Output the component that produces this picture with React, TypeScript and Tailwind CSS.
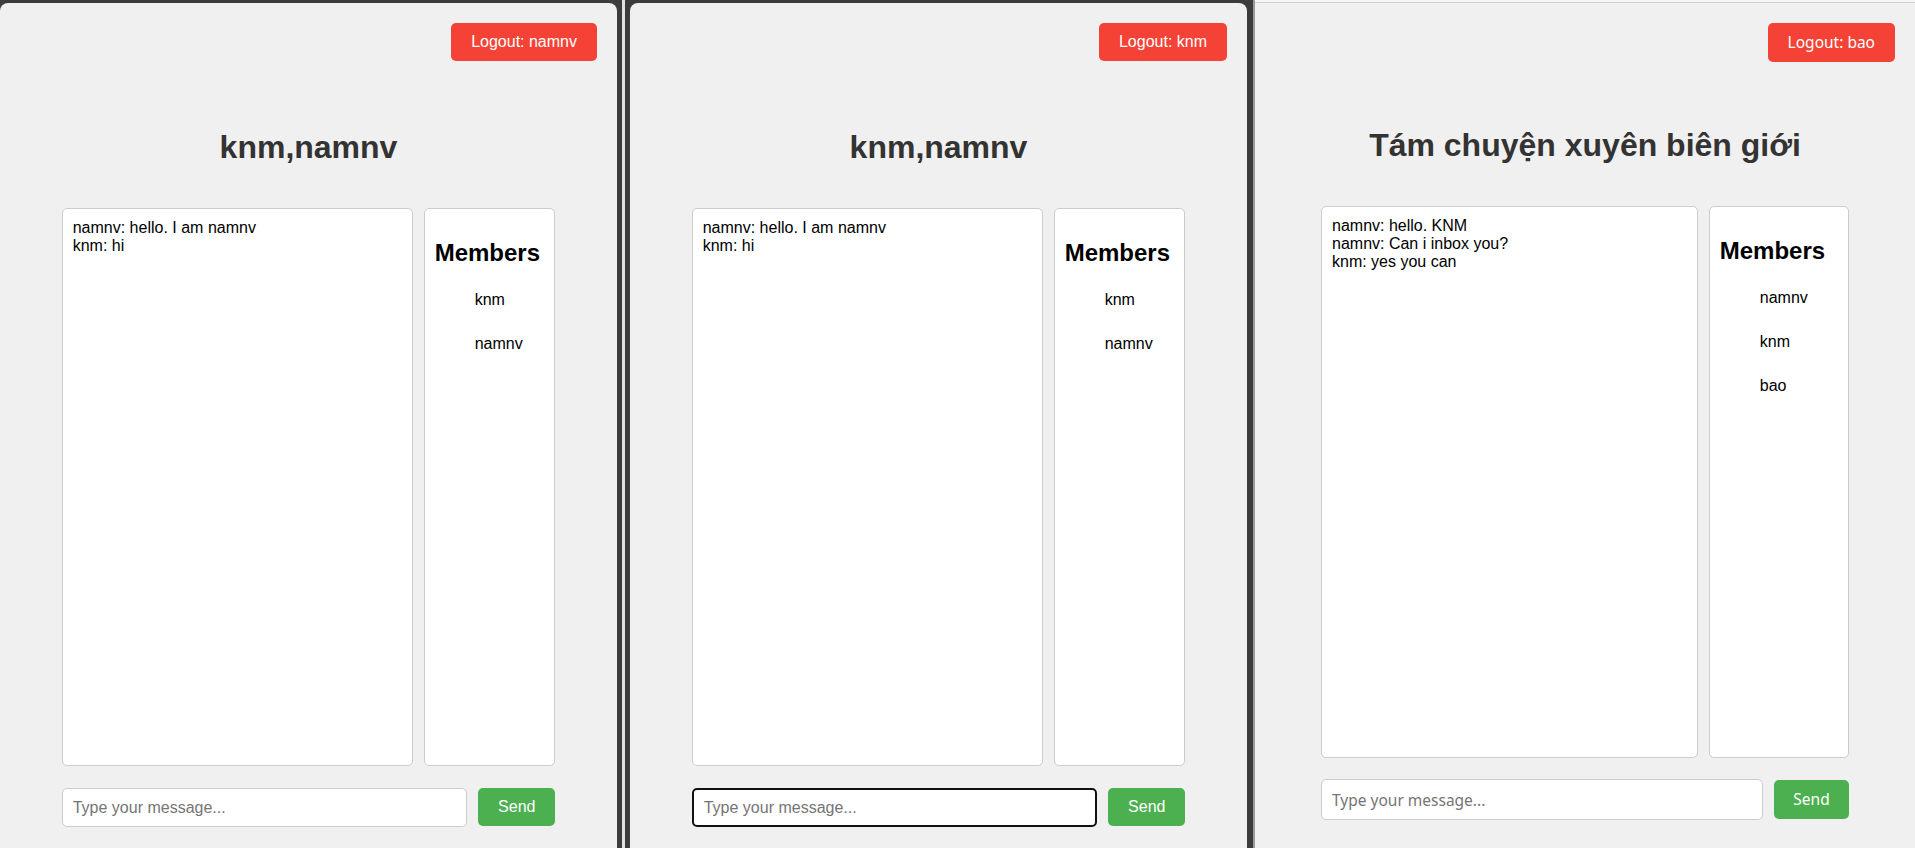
import React from "react";

type WinProps = {
  title: string;
  user: string;
  messages: string[];
  members: string[];
  focused?: boolean;
  ff?: boolean;
};

function ChatWindow({ title, user, messages, members, focused, ff }: WinProps) {
  const ctrlFont = ff
    ? "font-['Noto_Sans',sans-serif] text-[15.5px]"
    : "font-['Liberation_Sans',Arial,sans-serif] text-[16px]";
  return (
    <div className="flex h-full w-full flex-col font-['Liberation_Sans',Arial,sans-serif] text-black">
      <div className="flex justify-end pr-[20px] pt-[20px]">
        <button
          className={`flex items-center rounded-[5px] bg-[#f44336] px-[20px] text-white ${ctrlFont} ${
            ff ? "h-[39px]" : "h-[38px]"
          }`}
        >
          Logout: {user}
        </button>
      </div>
      <h1
        className={`text-center text-[32px] font-bold leading-[37px] text-[#333] ${
          ff ? "mt-[65px]" : "mt-[68px]"
        }`}
      >
        {title}
      </h1>
      <div className="mx-auto mt-[42px] flex w-[80%] gap-[11px]">
        <div
          className={`min-w-0 flex-[3] rounded-[5px] border border-[#ccc] bg-white p-[10px] text-[16px] leading-[18px] ${
            ff ? "h-[552px]" : "h-[558px]"
          }`}
        >
          {messages.map((m, i) => (
            <div key={i}>{m}</div>
          ))}
        </div>
        <div
          className={`min-w-0 flex-1 rounded-[5px] border border-[#ccc] bg-white p-[10px] ${
            ff ? "h-[552px]" : "h-[558px]"
          }`}
        >
          <h2 className="mt-[20px] text-[24px] font-bold leading-[28px]">Members</h2>
          <ul className="mt-[24px] pl-[40px] text-[16px] leading-[18px]">
            {members.map((m) => (
              <li key={m} className="h-[44px]">
                {m}
              </li>
            ))}
          </ul>
        </div>
      </div>
      <div
        className={`mx-auto flex w-[80%] items-start gap-[11px] ${ff ? "mt-[21px]" : "mt-[22px]"}`}
      >
        <input
          placeholder="Type your message..."
          className={`min-w-0 flex-1 rounded-[5px] bg-white px-[10px] outline-none placeholder:text-[#757575] ${ctrlFont} ${
            focused
              ? "h-[39px] border-[2px] border-[#111] px-[9px]"
              : ff
              ? "h-[41px] border border-[#ccc]"
              : "h-[39px] border border-[#ccc]"
          }`}
        />
        <button
          className={`flex shrink-0 items-center justify-center rounded-[5px] bg-[#4caf50] text-white ${ctrlFont} ${
            ff ? "mt-[1px] h-[39px] w-[75px]" : "h-[38px] w-[77px]"
          }`}
        >
          Send
        </button>
      </div>
    </div>
  );
}

export default function App() {
  return (
    <div className="flex h-[848px] w-[1915px] overflow-hidden bg-[#3c3c3c]">
      <div className="mt-[3px] h-[845px] w-[617px] shrink-0 rounded-t-[8px] bg-[#f0f0f0]">
        <ChatWindow
          title="knm,namnv"
          user="namnv"
          messages={["namnv: hello. I am namnv", "knm: hi"]}
          members={["knm", "namnv"]}
        />
      </div>
      <div className="flex w-[13px] shrink-0">
        <div className="ml-[5px] h-full w-[3px] bg-[#e2e2e2]" />
      </div>
      <div className="mt-[3px] h-[845px] w-[617px] shrink-0 rounded-t-[8px] bg-[#f0f0f0]">
        <ChatWindow
          title="knm,namnv"
          user="knm"
          messages={["namnv: hello. I am namnv", "knm: hi"]}
          members={["knm", "namnv"]}
          focused
        />
      </div>
      <div className="flex w-[8px] shrink-0 justify-end">
        <div className="h-full w-[2px] bg-[#9a9a9a]" />
      </div>
      <div className="flex h-[848px] min-w-0 flex-1 flex-col bg-[#f0f0f0]">
        <div className="h-[2px] shrink-0 bg-[#f7f7f7]" />
        <div className="h-[1px] shrink-0 bg-[#cfcfcf]" />
        <div className="min-h-0 flex-1">
          <ChatWindow
            title="Tám chuyện xuyên biên giới"
            user="bao"
            messages={["namnv: hello. KNM", "namnv: Can i inbox you?", "knm: yes you can"]}
            members={["namnv", "knm", "bao"]}
            ff
          />
        </div>
      </div>
    </div>
  );
}
